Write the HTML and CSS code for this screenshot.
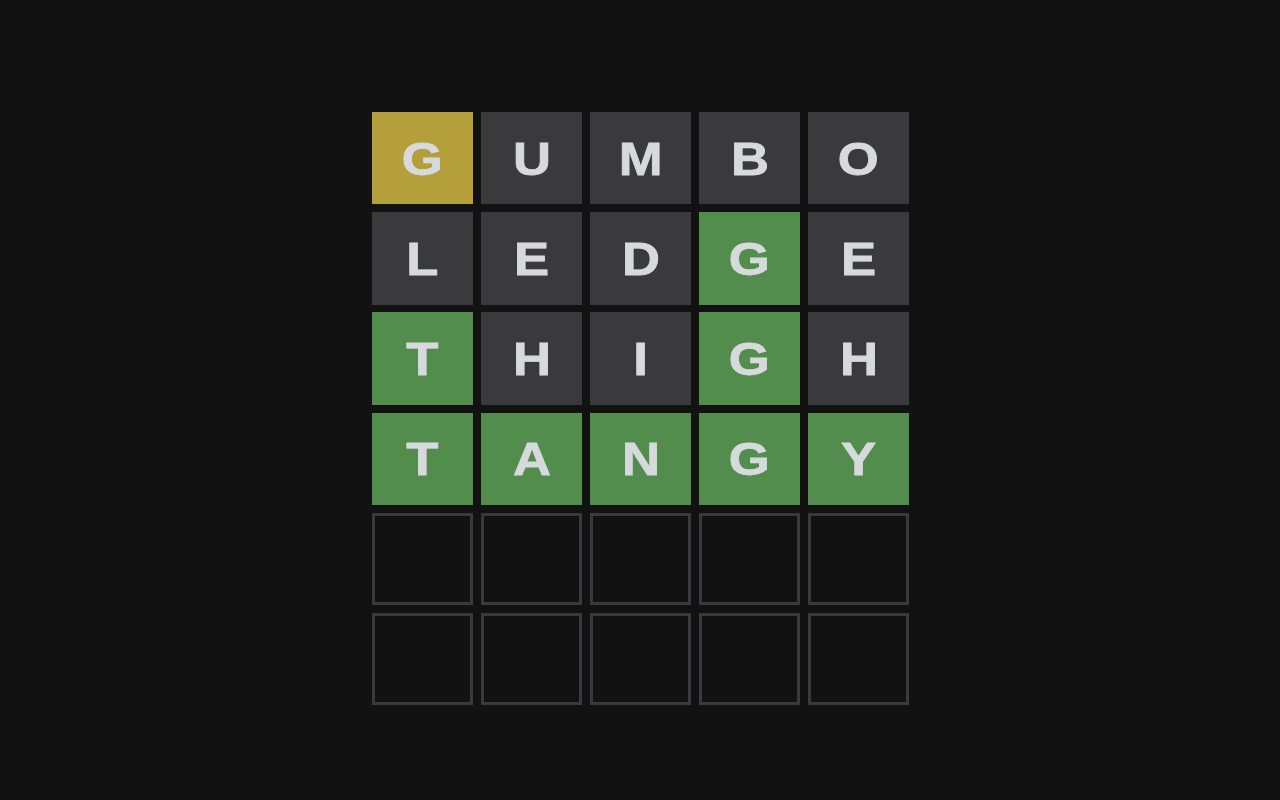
FILE: index.html
```html
<!DOCTYPE html>
<html lang="en">
<head>
<meta charset="utf-8">
<title>Wordle</title>
<link rel="stylesheet" href="styles.css">
</head>
<body>
<main class="board">
  <div class="tile present"><span class="letter">G</span></div>
  <div class="tile absent"><span class="letter">U</span></div>
  <div class="tile absent"><span class="letter">M</span></div>
  <div class="tile absent"><span class="letter">B</span></div>
  <div class="tile absent"><span class="letter">O</span></div>

  <div class="tile absent"><span class="letter">L</span></div>
  <div class="tile absent"><span class="letter">E</span></div>
  <div class="tile absent"><span class="letter">D</span></div>
  <div class="tile correct"><span class="letter">G</span></div>
  <div class="tile absent"><span class="letter">E</span></div>

  <div class="tile correct"><span class="letter">T</span></div>
  <div class="tile absent"><span class="letter">H</span></div>
  <div class="tile absent"><span class="letter">I</span></div>
  <div class="tile correct"><span class="letter">G</span></div>
  <div class="tile absent"><span class="letter">H</span></div>

  <div class="tile correct"><span class="letter">T</span></div>
  <div class="tile correct"><span class="letter">A</span></div>
  <div class="tile correct"><span class="letter">N</span></div>
  <div class="tile correct"><span class="letter">G</span></div>
  <div class="tile correct"><span class="letter">Y</span></div>

  <div class="tile empty"></div>
  <div class="tile empty"></div>
  <div class="tile empty"></div>
  <div class="tile empty"></div>
  <div class="tile empty"></div>

  <div class="tile empty"></div>
  <div class="tile empty"></div>
  <div class="tile empty"></div>
  <div class="tile empty"></div>
  <div class="tile empty"></div>
</main>
</body>
</html>
```

FILE: styles.css
```css
html, body {
  margin: 0;
  padding: 0;
  background: #121213;
  height: 100%;
}

body {
  display: flex;
  justify-content: center;
  align-items: flex-start;
  padding-top: 112px;
  box-sizing: border-box;
  font-family: "Liberation Sans", Arial, sans-serif;
}

.board {
  display: grid;
  grid-template-columns: repeat(5, 101px);
  grid-template-rows: repeat(6, 92.4px);
  column-gap: 8px;
  row-gap: 7.8px;
  margin-left: 1px;
}

.tile {
  display: flex;
  align-items: center;
  justify-content: center;
  box-sizing: border-box;
  color: #d7dadc;
  font-size: 47px;
  font-weight: 700;
  line-height: 1;
  text-transform: uppercase;
}

.letter {
  display: inline-block;
  transform: scaleX(1.12);
  -webkit-text-stroke: 0.8px #d7dadc;
}

.present { background: #b59f3b; }
.correct { background: #538d4e; }
.absent  { background: #3a3a3c; }
.empty   { border: 3px solid #3a3a3c; }
```
